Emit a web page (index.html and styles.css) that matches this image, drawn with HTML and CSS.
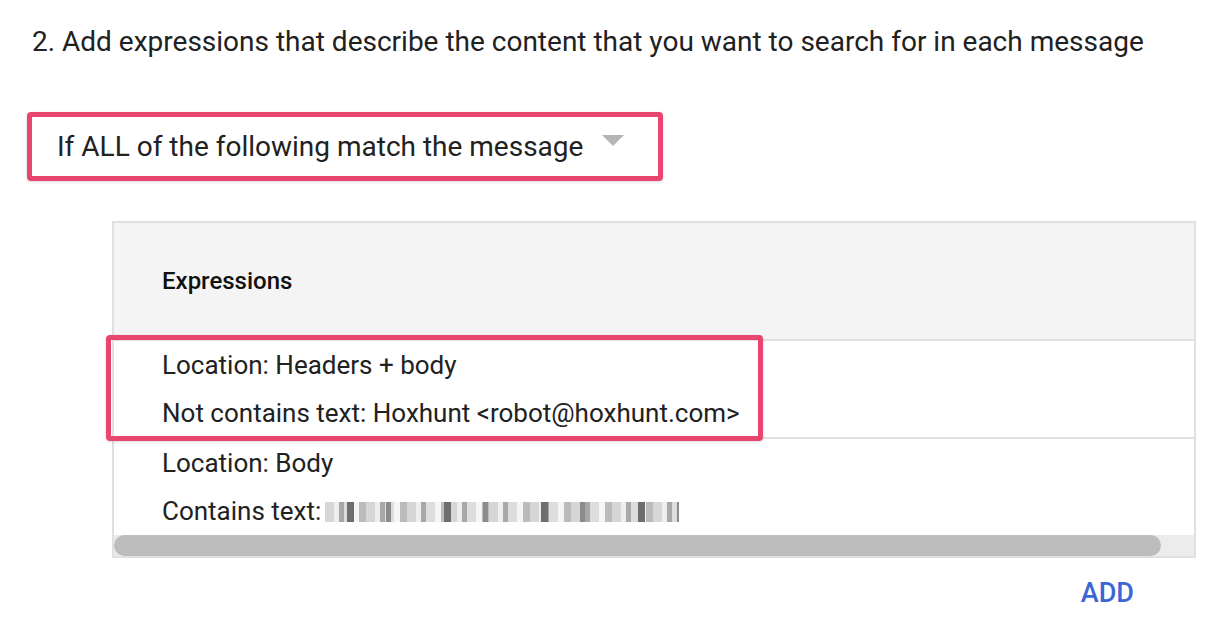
FILE: index.html
```html
<!DOCTYPE html>
<html lang="en">
<head>
    <meta charset="UTF-8">
    <title>Content compliance</title>
    <link rel="stylesheet" href="styles.css">
</head>
<body>
    <div class="page">
        <h2 class="step">2. Add expressions that describe the content that you want to search for in each message</h2>

        <div class="match-select">
            <span>If ALL of the following match the message</span>
            <span class="caret"></span>
        </div>

        <div class="expressions">
            <div class="expr-table">
                <div class="expr-head">Expressions</div>
                <div class="expr-row">
                    <div class="expr-line">Location: Headers + body</div>
                    <div class="expr-line">Not contains text: Hoxhunt &lt;robot@hoxhunt.com&gt;</div>
                </div>
                <div class="expr-row">
                    <div class="expr-line">Location: Body</div>
                    <div class="expr-line">Contains text: <span class="blurred"></span></div>
                </div>
                <div class="scroll-track">
                    <div class="scroll-thumb"></div>
                </div>
            </div>
            <div class="highlight"></div>
        </div>

        <div class="actions">
            <button class="add-btn">ADD</button>
        </div>
    </div>
</body>
</html>
```

FILE: styles.css
```css
:root {
    --text: #212121;
    --highlight: #e8466e;
    --border: #e0e0e0;
    --head-bg: #f4f4f4;
    --link: #3b66d6;
}

* {
    margin: 0;
    padding: 0;
    box-sizing: border-box;
}

body {
    font-family: Roboto, 'Noto Sans', sans-serif;
    color: var(--text);
    background: #fff;
}

.page {
    padding: 23px 0 0 27px;
    width: 1230px;
}

.step {
    font-size: 28px;
    font-weight: 400;
    line-height: 38px;
    padding-left: 5px;
}

.match-select {
    display: flex;
    align-items: center;
    justify-content: space-between;
    width: 636px;
    height: 69px;
    margin-top: 51px;
    padding: 0 34px 0 25px;
    border: 5px solid var(--highlight);
    border-radius: 4px;
    font-size: 28px;
    box-shadow: 0 1px 3px rgba(0,0,0,0.15);
}

.caret {
    width: 0;
    height: 0;
    border-left: 11px solid transparent;
    border-right: 11px solid transparent;
    border-top: 11px solid #b5b5b5;
    margin-top: -12px;
}

.expressions {
    position: relative;
    margin: 40px 0 0 85px;
    width: 1084px;
}

.expr-table {
    border: 2px solid var(--border);
}

.expr-head {
    height: 116px;
    display: flex;
    align-items: center;
    padding-left: 48px;
    background: var(--head-bg);
    font-size: 24px;
    font-weight: 500;
    color: #111;
}

.expr-row {
    border-top: 2px solid var(--border);
    padding-left: 48px;
    font-size: 26px;
}

.expr-line {
    height: 48px;
    line-height: 48px;
}

.blurred {
    display: inline-block;
    width: 354px;
    height: 20px;
    margin-left: -3px;
    vertical-align: -2px;
    background:
        repeating-linear-gradient(90deg, transparent 0 22px, #555 22px 29px, transparent 29px 61px, #777 61px 66px, transparent 66px 97px),
        repeating-linear-gradient(90deg, #cfcfcf 0 9px, #ececec 9px 14px, #9a9a9a 14px 19px, #d8d8d8 19px 28px, #f4f4f4 28px 34px, #b0b0b0 34px 41px);
    opacity: 0.85;
}

.scroll-track {
    height: 21px;
    background: #ececec;
    padding-right: 33px;
}

.scroll-thumb {
    height: 100%;
    background: #bdbdbd;
    border-radius: 11px;
}

.highlight {
    position: absolute;
    left: -6px;
    top: 114px;
    width: 657px;
    height: 106px;
    border: 5px solid var(--highlight);
    border-radius: 4px;
    box-shadow: 0 1px 3px rgba(0,0,0,0.15);
}

.actions {
    width: 1169px;
    display: flex;
    justify-content: flex-end;
    padding-top: 19px;
}

.add-btn {
    background: none;
    border: none;
    font-family: Roboto, sans-serif;
    font-size: 27px;
    font-weight: 500;
    color: var(--link);
    padding: 0 62px 0 0;
}
```
